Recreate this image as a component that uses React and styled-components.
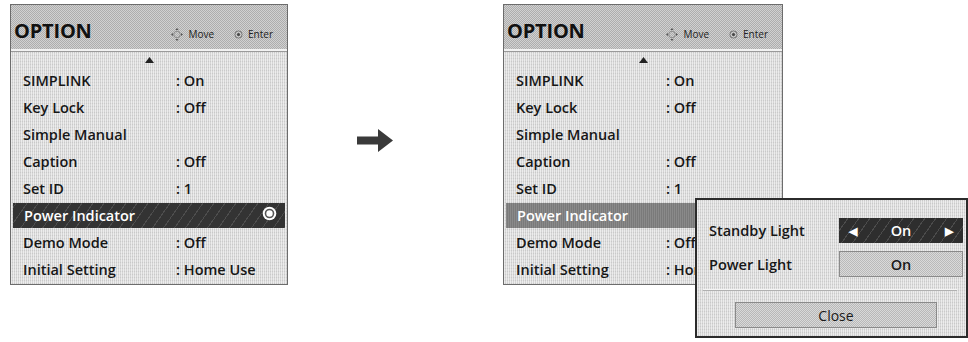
import React from "react";
import styled, { createGlobalStyle, css } from "styled-components";

const Global = createGlobalStyle`
  html, body { margin: 0; padding: 0; background: #fff; }
  body { font-family: "Open Sans", "Liberation Sans", sans-serif; color: #161616; }
`;

const lightTexture = css`
  background-color: #d6d6d6;
  background-image:
    repeating-linear-gradient(90deg, rgba(255,255,255,0.55) 0 1px, transparent 1px 2px),
    repeating-linear-gradient(0deg, rgba(0,0,0,0.06) 0 1px, transparent 1px 3px);
`;

const midTexture = css`
  background-color: #b8b8b8;
  background-image: repeating-conic-gradient(rgba(255,255,255,0.35) 0 25%, rgba(0,0,0,0.06) 0 50%);
  background-size: 2px 2px;
`;

const Page = styled.div`
  display: flex;
  align-items: flex-start;
  padding: 4px 0 0 10px;
  width: 968px;
  height: 342px;
  box-sizing: border-box;
  overflow: hidden;
`;

const Panel = styled.div`
  position: relative;
  width: ${(p) => p.$w}px;
  height: 281px;
  box-sizing: border-box;
  border: 1px solid #6c6c6c;
  display: flex;
  flex-direction: column;
  flex-shrink: 0;
`;

const Header = styled.div`
  ${midTexture};
  height: 46px;
  display: flex;
  align-items: flex-end;
  padding: 0 14px 6px 3px;
  box-sizing: border-box;
  border-bottom: 2px solid #f2f2f2;
  box-shadow: 0 1px 0 #9a9a9a;
`;

const Title = styled.div`
  font-size: 20px;
  font-weight: 700;
  letter-spacing: -0.2px;
  line-height: 24px;
  color: #111;
  flex: 1;
`;

const Hint = styled.div`
  display: flex;
  align-items: center;
  gap: 5px;
  font-size: 10px;
  line-height: 14px;
  color: #222;
  margin-bottom: 2px;
  margin-left: ${(p) => p.$ml || 0}px;
`;

const Body = styled.div`
  ${lightTexture};
  flex: 1;
  display: flex;
  flex-direction: column;
  margin-top: 1px;
`;

const UpRow = styled.div`
  height: 15px;
  display: flex;
  justify-content: center;
  align-items: center;
  padding-top: 1px;
  box-sizing: border-box;
`;

const Row = styled.div`
  height: 27px;
  display: grid;
  grid-template-columns: ${(p) => p.$col}px 1fr auto;
  align-items: center;
  padding: 0 8px 0 11px;
  margin: 0 1px;
  font-size: 14.5px;
  font-weight: 600;
  white-space: nowrap;
  ${(p) =>
    p.$sel === "dark" &&
    css`
      color: #fff;
      height: 25px;
      margin: 1px 2px;
      background-color: #333;
      background-image: repeating-linear-gradient(
        -55deg,
        rgba(255,255,255,0.13) 0 1px,
        transparent 1px 9px
      );
    `}
  ${(p) =>
    p.$sel === "mid" &&
    css`
      color: #fff;
      height: 25px;
      margin: 1px 2px;
      background-color: #7a7a7a;
      background-image: repeating-linear-gradient(90deg, rgba(255,255,255,0.12) 0 1px, transparent 1px 2px);
    `}
`;

const ArrowSlot = styled.div`
  width: 215px;
  flex-shrink: 0;
  padding: 125px 0 0 69px;
  box-sizing: border-box;
`;

const Popup = styled.div`
  position: absolute;
  left: 191px;
  top: 193px;
  width: 273px;
  height: 140px;
  box-sizing: border-box;
  border: 2px solid #2b2b2b;
  ${lightTexture};
  display: flex;
  flex-direction: column;
  padding: 18px 3px 0 12px;
  z-index: 2;
`;

const PopRow = styled.div`
  display: flex;
  align-items: center;
  justify-content: space-between;
  font-size: 14.5px;
  font-weight: 600;
  margin-bottom: 8px;
`;

const OptButton = styled.div`
  width: 124px;
  height: 25px;
  box-sizing: border-box;
  display: flex;
  align-items: center;
  justify-content: space-between;
  padding: 0 10px;
  font-size: 14.5px;
  font-weight: 600;
  ${(p) =>
    p.$active
      ? css`
          color: #fff;
          background-color: #2e2e2e;
          background-image: repeating-linear-gradient(-55deg, rgba(255,255,255,0.14) 0 1px, transparent 1px 9px);
        `
      : css`
          color: #1a1a1a;
          height: 26px;
          border: 1px solid #8a8a8a;
          ${midTexture};
          background-color: #c6c6c6;
          justify-content: center;
        `}
`;

const Tri = styled.span`
  font-size: 11px;
  line-height: 1;
`;

const Separator = styled.div`
  height: 1px;
  margin: 4px 6px 0 -6px;
  background: #f4f4f4;
  box-shadow: 0 1px 0 #b0b0b0;
`;

const CloseButton = styled.div`
  margin: 12px 0 0 26px;
  width: 202px;
  height: 26px;
  box-sizing: border-box;
  border: 1px solid #8a8a8a;
  ${midTexture};
  background-color: #c4c4c4;
  display: flex;
  align-items: center;
  justify-content: center;
  font-size: 14px;
  font-weight: 500;
  color: #1a1a1a;
`;

const MoveIcon = () => (
  <svg width="12" height="13" viewBox="0 0 12 13">
    <circle cx="6" cy="6.5" r="3.3" fill="none" stroke="#8a8a8a" strokeWidth="1" />
    <path d="M6 0 L7.6 2 L4.4 2 Z" fill="#555" />
    <path d="M6 13 L7.6 11 L4.4 11 Z" fill="#555" />
    <path d="M0 6.5 L2 4.9 L2 8.1 Z" fill="#555" />
    <path d="M12 6.5 L10 4.9 L10 8.1 Z" fill="#555" />
  </svg>
);

const EnterIcon = () => (
  <svg width="9" height="9" viewBox="0 0 9 9">
    <circle cx="4.5" cy="4.5" r="3.6" fill="none" stroke="#777" strokeWidth="1" />
    <circle cx="4.5" cy="4.5" r="1.5" fill="#444" />
  </svg>
);

const UpTriangle = () => (
  <svg width="9" height="6" viewBox="0 0 9 6">
    <path d="M4.5 0 L9 6 L0 6 Z" fill="#222" />
  </svg>
);

const RadioIcon = () => (
  <svg width="15" height="15" viewBox="0 0 15 15">
    <circle cx="7.5" cy="7.5" r="6.8" fill="#fff" />
    <circle cx="7.5" cy="7.5" r="4.8" fill="#555" />
    <circle cx="7.5" cy="7.5" r="3.2" fill="#fff" />
  </svg>
);

const BigArrow = () => (
  <svg width="36" height="23" viewBox="0 0 36 23">
    <path d="M0 7.5 H21 V0 L36 11.5 L21 23 V15.5 H0 Z" fill="#3a3a3a" />
  </svg>
);

const items = [
  ["SIMPLINK", ": On"],
  ["Key Lock", ": Off"],
  ["Simple Manual", ""],
  ["Caption", ": Off"],
  ["Set ID", ": 1"],
  ["Power Indicator", ""],
  ["Demo Mode", ": Off"],
  ["Initial Setting", ": Home Use"],
];

function Menu({ width, col, selStyle, radio, children }) {
  return (
    <Panel $w={width}>
      <Header>
        <Title>OPTION</Title>
        <Hint>
          <MoveIcon />
          Move
        </Hint>
        <Hint $ml={20}>
          <EnterIcon />
          Enter
        </Hint>
      </Header>
      <Body>
        <UpRow>
          <UpTriangle />
        </UpRow>
        {items.map(([label, value]) => {
          const sel = label === "Power Indicator";
          return (
            <Row key={label} $col={col} $sel={sel ? selStyle : undefined}>
              <span>{label}</span>
              <span>{value}</span>
              <span>{sel && radio ? <RadioIcon /> : null}</span>
            </Row>
          );
        })}
      </Body>
      {children}
    </Panel>
  );
}

export default function App() {
  return (
    <>
      <Global />
      <Page>
        <Menu width={278} col={153} selStyle="dark" radio />
        <ArrowSlot>
          <BigArrow />
        </ArrowSlot>
        <Menu width={280} col={150} selStyle="mid">
          <Popup>
            <PopRow>
              <span>Standby Light</span>
              <OptButton $active>
                <Tri>◀</Tri>
                <span>On</span>
                <Tri>▶</Tri>
              </OptButton>
            </PopRow>
            <PopRow>
              <span>Power Light</span>
              <OptButton>On</OptButton>
            </PopRow>
            <Separator />
            <CloseButton>Close</CloseButton>
          </Popup>
        </Menu>
      </Page>
    </>
  );
}
